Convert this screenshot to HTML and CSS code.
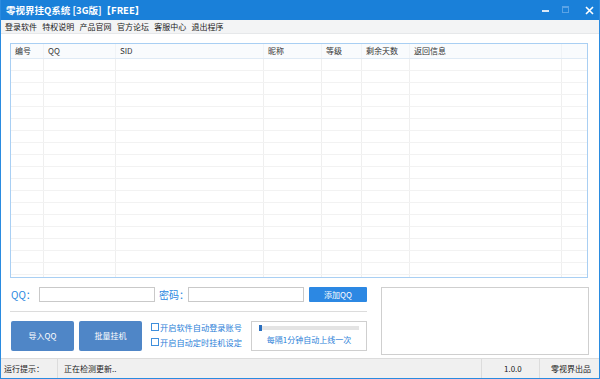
FILE: index.html
```html
<!DOCTYPE html>
<html lang="zh">
<head>
<meta charset="utf-8">
<title>零视界挂Q系统</title>
<link rel="stylesheet" href="styles.css">
</head>
<body>
<div class="window">
  <div class="titlebar">
    <span class="title">零视界挂Q系统 [3G版]【FREE】</span>
    <div class="controls">
      <svg class="ctl" width="8" height="8" viewBox="0 0 8 8"><rect x="0" y="3" width="7" height="2" fill="#dbe9f7"/></svg>
      <svg class="ctl" width="8" height="8" viewBox="0 0 8 8"><rect x="0.5" y="0.5" width="6" height="6" fill="none" stroke="#5aa3e6" stroke-width="1"/><rect x="0.5" y="0.5" width="6" height="1.5" fill="#5aa3e6"/></svg>
      <svg class="ctl" width="9" height="9" viewBox="0 0 9 9"><path d="M1 1 L8 8 M8 1 L1 8" stroke="#ffffff" stroke-width="1.6"/></svg>
    </div>
  </div>
  <div class="menubar">
    <span class="menu">登录软件</span>
    <span class="menu">特权说明</span>
    <span class="menu">产品官网</span>
    <span class="menu">官方论坛</span>
    <span class="menu">客服中心</span>
    <span class="menu">退出程序</span>
  </div>
  <div class="content">
    <div class="table">
      <div class="row head">
        <div class="cell">编号</div>
        <div class="cell">QQ</div>
        <div class="cell">SID</div>
        <div class="cell">昵称</div>
        <div class="cell">等级</div>
        <div class="cell">剩余天数</div>
        <div class="cell">返回信息</div>
        <div class="cell"></div>
      </div>
      <div class="body">
        <div class="row"><div class="cell"></div><div class="cell"></div><div class="cell"></div><div class="cell"></div><div class="cell"></div><div class="cell"></div><div class="cell"></div><div class="cell"></div></div>
        <div class="row"><div class="cell"></div><div class="cell"></div><div class="cell"></div><div class="cell"></div><div class="cell"></div><div class="cell"></div><div class="cell"></div><div class="cell"></div></div>
        <div class="row"><div class="cell"></div><div class="cell"></div><div class="cell"></div><div class="cell"></div><div class="cell"></div><div class="cell"></div><div class="cell"></div><div class="cell"></div></div>
        <div class="row"><div class="cell"></div><div class="cell"></div><div class="cell"></div><div class="cell"></div><div class="cell"></div><div class="cell"></div><div class="cell"></div><div class="cell"></div></div>
        <div class="row"><div class="cell"></div><div class="cell"></div><div class="cell"></div><div class="cell"></div><div class="cell"></div><div class="cell"></div><div class="cell"></div><div class="cell"></div></div>
        <div class="row"><div class="cell"></div><div class="cell"></div><div class="cell"></div><div class="cell"></div><div class="cell"></div><div class="cell"></div><div class="cell"></div><div class="cell"></div></div>
        <div class="row"><div class="cell"></div><div class="cell"></div><div class="cell"></div><div class="cell"></div><div class="cell"></div><div class="cell"></div><div class="cell"></div><div class="cell"></div></div>
        <div class="row"><div class="cell"></div><div class="cell"></div><div class="cell"></div><div class="cell"></div><div class="cell"></div><div class="cell"></div><div class="cell"></div><div class="cell"></div></div>
        <div class="row"><div class="cell"></div><div class="cell"></div><div class="cell"></div><div class="cell"></div><div class="cell"></div><div class="cell"></div><div class="cell"></div><div class="cell"></div></div>
        <div class="row"><div class="cell"></div><div class="cell"></div><div class="cell"></div><div class="cell"></div><div class="cell"></div><div class="cell"></div><div class="cell"></div><div class="cell"></div></div>
        <div class="row"><div class="cell"></div><div class="cell"></div><div class="cell"></div><div class="cell"></div><div class="cell"></div><div class="cell"></div><div class="cell"></div><div class="cell"></div></div>
        <div class="row"><div class="cell"></div><div class="cell"></div><div class="cell"></div><div class="cell"></div><div class="cell"></div><div class="cell"></div><div class="cell"></div><div class="cell"></div></div>
        <div class="row"><div class="cell"></div><div class="cell"></div><div class="cell"></div><div class="cell"></div><div class="cell"></div><div class="cell"></div><div class="cell"></div><div class="cell"></div></div>
        <div class="row"><div class="cell"></div><div class="cell"></div><div class="cell"></div><div class="cell"></div><div class="cell"></div><div class="cell"></div><div class="cell"></div><div class="cell"></div></div>
        <div class="row"><div class="cell"></div><div class="cell"></div><div class="cell"></div><div class="cell"></div><div class="cell"></div><div class="cell"></div><div class="cell"></div><div class="cell"></div></div>
        <div class="row"><div class="cell"></div><div class="cell"></div><div class="cell"></div><div class="cell"></div><div class="cell"></div><div class="cell"></div><div class="cell"></div><div class="cell"></div></div>
        <div class="row"><div class="cell"></div><div class="cell"></div><div class="cell"></div><div class="cell"></div><div class="cell"></div><div class="cell"></div><div class="cell"></div><div class="cell"></div></div>
        <div class="row"><div class="cell"></div><div class="cell"></div><div class="cell"></div><div class="cell"></div><div class="cell"></div><div class="cell"></div><div class="cell"></div><div class="cell"></div></div>
        <div class="row"><div class="cell"></div><div class="cell"></div><div class="cell"></div><div class="cell"></div><div class="cell"></div><div class="cell"></div><div class="cell"></div><div class="cell"></div></div>
      </div>
    </div>
    <div class="bottom">
      <div class="controls-left">
        <div class="form-row">
          <span class="label">QQ：</span>
          <span class="input"></span>
          <span class="label label-pw">密码：</span>
          <span class="input"></span>
          <span class="btn-add">添加QQ</span>
        </div>
        <div class="sep"></div>
        <div class="action-row">
          <span class="btn-big">导入QQ</span>
          <span class="btn-big">批量挂机</span>
          <div class="checks">
            <label class="check"><span class="box"></span>开启软件自动登录账号</label>
            <label class="check"><span class="box"></span>开启自动定时挂机设定</label>
          </div>
          <div class="slider-box">
            <div class="track"><span class="thumb"></span></div>
            <div class="slider-text">每隔1分钟自动上线一次</div>
          </div>
        </div>
      </div>
      <div class="logbox"></div>
    </div>
  </div>
  <div class="statusbar">
    <span class="st st-label">运行提示：</span>
    <span class="st st-msg">正在检测更新..</span>
    <span class="st st-ver">1.0.0</span>
    <span class="st st-by">零视界出品</span>
  </div>
</div>
</body>
</html>
```
FILE: styles.css
```css
html, body {
  margin: 0;
  padding: 0;
  background: #ffffff;
}
body {
  font-family: "Noto Sans CJK SC", "Noto Sans", sans-serif;
  font-size: 8px;
  color: #333333;
}
.window {
  width: 600px;
  height: 379px;
  box-sizing: border-box;
  border: 1px solid #2a8be0;
  border-top: none;
  display: flex;
  flex-direction: column;
  background: #ffffff;
  overflow: hidden;
}
.titlebar {
  height: 20px;
  margin: 0 -1px;
  background: #1a80d9;
  display: flex;
  align-items: center;
  padding-left: 6px;
}
.title {
  color: #ffffff;
  font-weight: bold;
  font-size: 9.5px;
  line-height: 20px;
  flex: 1;
  white-space: pre;
}
.controls {
  display: flex;
  align-items: center;
  height: 20px;
}
.ctl {
  display: block;
}
.controls .ctl:nth-child(1) { margin-right: 12px; margin-top: 2px; }
.controls .ctl:nth-child(2) { margin-right: 15px; }
.controls .ctl:nth-child(3) { margin-right: 6px; }

.menubar {
  height: 13px;
  background: #f3f4f5;
  border-bottom: 1px solid #e6e8ea;
  display: flex;
  align-items: center;
  padding-left: 4px;
}
.menu {
  width: 37.3px;
  font-size: 8px;
  line-height: 13px;
  color: #222222;
}

.content {
  flex: 1;
  padding: 9px 0 0 9px;
  display: flex;
  flex-direction: column;
}
.table {
  width: 578px;
  height: 235px;
  box-sizing: border-box;
  border: 1px solid #a9cff3;
  overflow: hidden;
}
.row {
  display: grid;
  grid-template-columns: 33px 72px 148px 58px 40px 48px 152px 1fr;
  height: 12px;
  box-sizing: border-box;
  border-bottom: 1px solid #f2f2f2;
}
.row .cell {
  border-right: 1px solid #efefef;
  padding-left: 4px;
  line-height: 13px;
  font-size: 8px;
  color: #333333;
  white-space: nowrap;
  overflow: hidden;
}
.row .cell:last-child {
  border-right: none;
}
.row.head {
  height: 15px;
  background: #f9fbfd;
  border-bottom: 1px solid #dfeaf5;
}
.row.head .cell {
  line-height: 14px;
  border-right-color: #f0f3f6;
}

.bottom {
  display: flex;
  margin-top: 9px;
}
.controls-left {
  width: 357px;
  display: flex;
  flex-direction: column;
}
.form-row {
  height: 15px;
  display: flex;
  align-items: center;
}
.label {
  color: #2a87e0;
  font-size: 10px;
  line-height: 15px;
  width: 29px;
  padding-left: 1px;
  box-sizing: border-box;
  white-space: nowrap;
  flex-shrink: 0;
  overflow: hidden;
}
.label-pw {
  width: 33px;
  padding-left: 4px;
}
.input {
  width: 116px;
  height: 15px;
  box-sizing: border-box;
  border: 1px solid #c9c9c9;
  background: #ffffff;
  flex-shrink: 0;
}
.btn-add {
  margin-left: 5px;
  width: 58px;
  height: 15px;
  background: #2c88e3;
  color: #ffffff;
  font-size: 8px;
  line-height: 15px;
  text-align: center;
  border-radius: 1px;
  flex-shrink: 0;
}
.sep {
  height: 1px;
  background: #dcdcdc;
  margin-top: 9px;
}
.action-row {
  margin-top: 9px;
  display: flex;
  height: 30px;
}
.btn-big {
  width: 63px;
  height: 30px;
  margin-left: 1px;
  margin-right: 4px;
  background: #4f86c7;
  color: #ffffff;
  font-size: 8px;
  line-height: 30px;
  text-align: center;
  border-radius: 2px;
}
.checks {
  margin-left: 5px;
  display: flex;
  flex-direction: column;
  padding-top: 1px;
  gap: 5px;
  width: 100px;
}
.check {
  display: flex;
  align-items: center;
  color: #2b80d8;
  font-size: 8.2px;
  line-height: 10px;
  white-space: nowrap;
}
.box {
  width: 8px;
  height: 8px;
  box-sizing: border-box;
  border: 1px solid #3f8fdc;
  margin-right: 1px;
  background: #ffffff;
}
.slider-box {
  width: 116px;
  height: 30px;
  box-sizing: border-box;
  border: 1px solid #cfcfcf;
  display: flex;
  flex-direction: column;
  align-items: center;
}
.track {
  margin-top: 4px;
  width: 100px;
  height: 4px;
  background: #e4e4e4;
  position: relative;
}
.thumb {
  position: absolute;
  left: 0;
  top: -1px;
  width: 3px;
  height: 6px;
  background: #2a6fbf;
}
.slider-text {
  margin-top: 5px;
  color: #2b80d8;
  font-size: 8px;
  line-height: 10px;
  white-space: nowrap;
}
.logbox {
  margin-left: 14px;
  width: 208px;
  height: 68px;
  box-sizing: border-box;
  border: 1px solid #cfcfcf;
}

.statusbar {
  height: 20px;
  box-sizing: border-box;
  border-top: 1px solid #dcdcdc;
  background: #f0f0f0;
  display: flex;
}
.st {
  line-height: 19px;
  font-size: 8px;
  color: #222222;
  white-space: nowrap;
  box-sizing: border-box;
}
.st-label {
  width: 57px;
  padding-left: 3px;
  border-right: 1px solid #dcdcdc;
}
.st-msg {
  width: 424px;
  padding-left: 6px;
  border-right: 1px solid #dcdcdc;
}
.st-ver {
  width: 58px;
  padding-left: 22px;
  border-right: 1px solid #dcdcdc;
}
.st-by {
  flex: 1;
  padding-left: 11px;
}
```
